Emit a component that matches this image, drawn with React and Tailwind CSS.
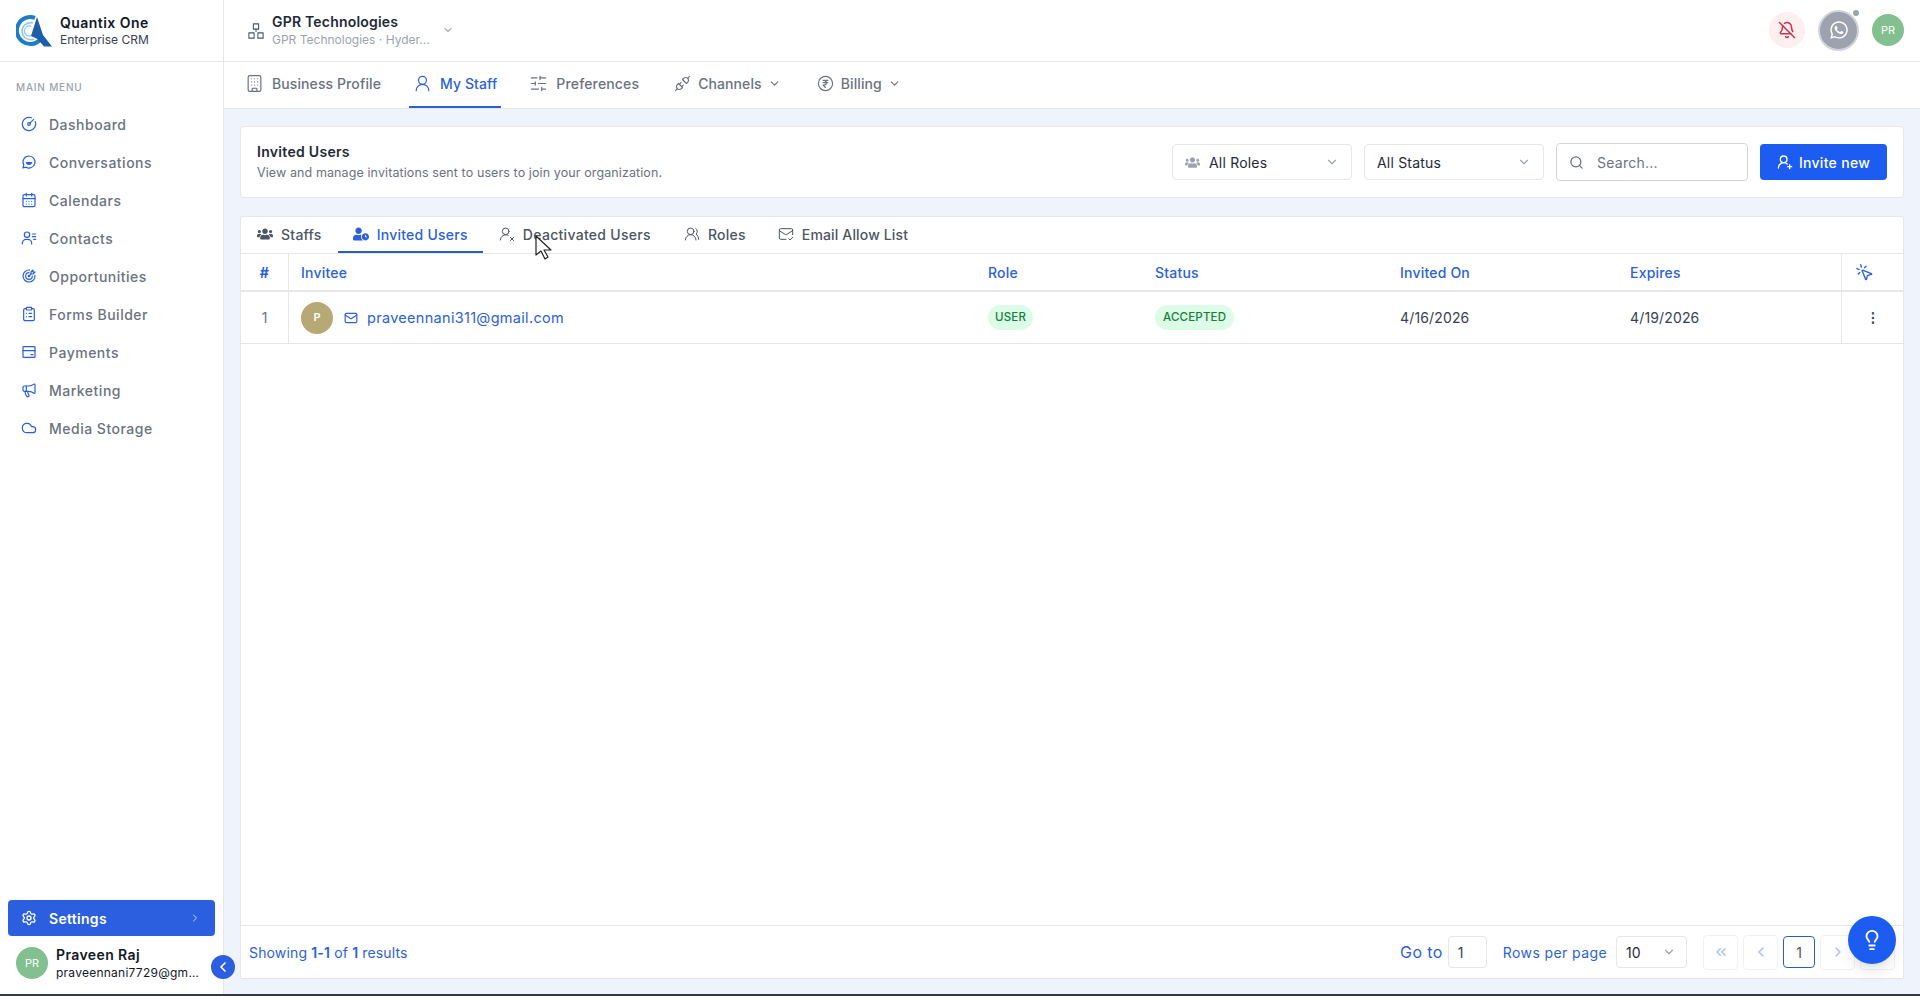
import React from "react";
import { CircleGauge, CalendarDays, ClipboardList, Megaphone, Cloud, Settings, ChevronRight, ChevronLeft, ChevronDown, ChevronsLeft, Building, UserRound, SlidersHorizontal, BellOff, Search, UserRoundPlus, UserRoundX, UsersRound, MailCheck, Mail, EllipsisVertical, MousePointerClick, Lightbulb } from "lucide-react";
import { FaUsers, FaUserClock, FaWhatsapp } from "react-icons/fa";
import { TbCoinRupee, TbPlugConnected, TbTargetArrow } from "react-icons/tb";

const Svg = ({ size = 16, strokeWidth = 1.8, className = "", children }) => (
  <svg width={size} height={size} viewBox="0 0 24 24" fill="none" stroke="currentColor" strokeWidth={strokeWidth} strokeLinecap="round" strokeLinejoin="round" className={className}>{children}</svg>
);
const ChatSmile = (p) => (
  <Svg {...p}>
    <path d="M12 3a9 9 0 1 1-4.5 16.8L3 21l1.2-4.5A9 9 0 0 1 12 3z" />
    <path d="M8 13a4.5 4.5 0 0 0 8 0z" fill="currentColor" />
  </Svg>
);
const ContactsIcon = (p) => (
  <Svg {...p}>
    <circle cx="9" cy="7" r="4" />
    <path d="M2 21v-1a6 6 0 0 1 6-6h2a6 6 0 0 1 6 6v1" />
    <path d="M17 6h5M17 10h5M19 14h3" />
  </Svg>
);
const PaymentsIcon = (p) => (
  <Svg {...p}>
    <rect x="3" y="4" width="18" height="16" rx="1" />
    <path d="M3 10h18M15 16h3" />
  </Svg>
);
const OrgIcon = (p) => (
  <Svg {...p}>
    <rect x="8.5" y="2.5" width="7" height="7" />
    <rect x="2.5" y="14.5" width="7" height="7" />
    <rect x="14.5" y="14.5" width="7" height="7" />
    <path d="M12 9.5v3" />
  </Svg>
);

const nav = [
  ["Dashboard", CircleGauge],
  ["Conversations", ChatSmile],
  ["Calendars", CalendarDays],
  ["Contacts", ContactsIcon],
  ["Opportunities", TbTargetArrow],
  ["Forms Builder", ClipboardList],
  ["Payments", PaymentsIcon],
  ["Marketing", Megaphone],
  ["Media Storage", Cloud],
];

function Logo() {
  return (
    <svg viewBox="0 0 36 32" className="w-[36px] h-[32px]">
      <path d="M19 2.9 A13.5 13.5 0 1 0 24 25" fill="none" stroke="#1c7cc4" strokeWidth="4" />
      <path d="M17 8 A8.5 8.5 0 1 0 18 24" fill="none" stroke="#8cc8ee" strokeWidth="1.6" />
      <path d="M15.5 11.5 A5 5 0 1 0 15.5 20.5" fill="none" stroke="#8cc8ee" strokeWidth="1.2" />
      <path d="M21 2 L27 20 L36 31.5 L28 31.5 L21.5 24 L15 21 Z" fill="#1c5ea8" />
    </svg>
  );
}

export default function App() {
  return (
    <div className="h-[996px] w-[1920px] flex flex-col font-['Inter',sans-serif] bg-[#eff3fc] overflow-hidden">
      <div className="flex flex-1 min-h-0">
        <aside className="w-[224px] bg-white border-r border-[#e5e7eb] flex flex-col relative shrink-0">
          <div className="h-[62px] flex items-center gap-[8px] pl-[16px] border-b border-[#e5e7eb] shrink-0">
            <Logo />
            <div className="leading-none">
              <div className="text-[14px] font-semibold text-[#111827] leading-[18px] tracking-[0.45px]">Quantix One</div>
              <div className="text-[12px] text-[#374151] leading-[16px]">Enterprise CRM</div>
            </div>
          </div>
          <div className="px-[16px] pt-[19px] text-[10px] font-medium tracking-[0.8px] text-[#9ca3af] leading-[12px]">MAIN MENU</div>
          <nav className="flex flex-col mt-[12px]">
            {nav.map(([t, I]) => (
              <div key={t} className="h-[38px] flex items-center gap-[12px] pl-[21px]">
                <I size={16} strokeWidth={1.8} className="text-[#2a5fdf]" />
                <span className="text-[14px] font-medium text-[#6b7280] tracking-[0.5px]">{t}</span>
              </div>
            ))}
          </nav>
          <div className="mt-auto px-[8px]">
            <div className="h-[36px] rounded-[4px] bg-[#2b5fe0] flex items-center pl-[13px] pr-[14px] gap-[12px]">
              <Settings size={16} className="text-white" />
              <span className="text-[14px] font-semibold text-white tracking-[0.3px]">Settings</span>
              <ChevronRight size={12} className="ml-auto text-[#c7d5f7]" />
            </div>
          </div>
          <div className="h-[58px] flex items-center pl-[16px] gap-[8px] pb-[4px] shrink-0">
            <div className="w-[32px] h-[32px] rounded-full bg-[#82c08f] text-white text-[11px] flex items-center justify-center shrink-0">PR</div>
            <div className="min-w-0">
              <div className="text-[14px] font-semibold text-[#111827] leading-[18px] tracking-[0.4px]">Praveen Raj</div>
              <div className="text-[12px] text-[#111827] leading-[17px] w-[145px] truncate tracking-[0.25px]">praveennani7729@gmail.com</div>
            </div>
          </div>
          <div className="absolute left-[211px] top-[955px] w-[24px] h-[24px] rounded-full bg-[#2b5fe0] flex items-center justify-center z-10">
            <ChevronLeft size={16} strokeWidth={2.5} className="text-white" />
          </div>
        </aside>
        <main className="flex-1 min-w-0 flex flex-col">
          <header className="h-[62px] bg-white border-b border-[#e5e7eb] flex items-center pl-[23px] pr-[16px] shrink-0">
            <OrgIcon size={18} strokeWidth={1.4} className="text-[#4b5563]" />
            <div className="ml-[7px]">
              <div className="text-[14px] font-semibold text-[#1f2937] leading-[18px] tracking-[0.2px]">GPR Technologies</div>
              <div className="text-[12px] text-[#9ca3af] leading-[17px]">GPR Technologies · Hyder...</div>
            </div>
            <ChevronDown size={12} className="ml-[12px] -mt-[2px] text-[#6b7280]" />
            <div className="ml-auto flex items-center gap-[13px] -mt-[1px]">
              <div className="w-[36px] h-[36px] rounded-full bg-[#fdeef0] flex items-center justify-center"><BellOff size={18} className="text-[#d0314a]" /></div>
              <div className="relative w-[41px] h-[41px] rounded-full bg-[#9ca3af] border-2 border-[#d1d5db] flex items-center justify-center">
                <FaWhatsapp size={20} className="text-white" />
                <span className="absolute right-[-2px] top-[-2px] w-[6px] h-[6px] rounded-full bg-[#9ca3af]"></span>
              </div>
              <div className="w-[32px] h-[32px] rounded-full bg-[#82c08f] text-white text-[11px] flex items-center justify-center">PR</div>
            </div>
          </header>
          <div className="h-[47px] bg-white border-b border-[#e5e7eb] flex items-stretch pl-[17px] gap-[24px] shrink-0">
            {[
              ["Business Profile", Building, false, false, "tracking-[0.1px]"],
              ["My Staff", UserRound, false, true, "tracking-[0.1px]"],
              ["Preferences", SlidersHorizontal, false, false, "tracking-[0.15px]"],
              ["Channels", TbPlugConnected, true, false, "ml-[2px] tracking-[0.1px]"],
              ["Billing", TbCoinRupee, true, false, "ml-[3px] tracking-[0.1px]"],
            ].map(([t, I, dd, act, c]) => (
              <div key={t} className={`flex items-center px-[4px] pb-[1px] text-[14px] font-medium border-b-2 ${c} ${dd ? "gap-[6px]" : "gap-[8px]"} ${act ? "border-[#2b5fe0] text-[#2b5fe0]" : "border-transparent text-[#6b7280]"}`}>
                <I size={19} strokeWidth={1.5} />
                <span>{t}</span>
                {dd && <ChevronDown size={13} />}
              </div>
            ))}
          </div>
          <div className="flex-1 min-h-0 flex flex-col gap-[18px] pt-[17px] pb-[15px] pl-[16px] pr-[16px]">
            <section className="h-[72px] bg-white rounded-[4px] border border-[#e5e7eb] flex items-center pl-[16px] pr-[16px] shrink-0">
              <div>
                <div className="text-[14px] font-semibold text-[#1f2937] leading-[21px] tracking-[0.3px]">Invited Users</div>
                <div className="text-[12.5px] text-[#6b7280] leading-[21px] tracking-[0.1px]">View and manage invitations sent to users to join your organization.</div>
              </div>
              <div className="ml-auto flex items-center gap-[12px]">
                <div className="w-[180px] h-[36px] border border-[#e5e7eb] rounded-[4px] flex items-center pl-[12px] pr-[12px] gap-[9px] text-[14px] tracking-[0.2px] text-[#1f2937]">
                  <FaUsers size={15} className="text-[#9ca3af]" /> All Roles <ChevronDown size={14} className="ml-auto text-[#9ca3af]" />
                </div>
                <div className="w-[180px] h-[36px] border border-[#e5e7eb] rounded-[4px] flex items-center pl-[12px] pr-[12px] text-[14px] tracking-[0.2px] text-[#1f2937]">
                  All Status <ChevronDown size={14} className="ml-auto text-[#9ca3af]" />
                </div>
                <div className="w-[192px] h-[38px] border border-[#d1d5db] rounded-[4px] flex items-center pl-[12px] gap-[13px] text-[14px] tracking-[0.25px] text-[#6b7280]">
                  <Search size={15} /> Search...
                </div>
                <div className="w-[127px] h-[36px] bg-[#1d5cf0] rounded-[4px] flex items-center justify-center gap-[6px] text-white text-[14px] font-medium tracking-[0.3px]">
                  <UserRoundPlus size={16} /> Invite new
                </div>
              </div>
            </section>
            <section className="flex-1 min-h-0 bg-white border border-[#e5e7eb] flex flex-col rounded-[2px]">
              <div className="h-[37px] flex items-stretch border-b border-[#e5e7eb] text-[14px] shrink-0">
                {[
                  ["Staffs", FaUsers, false, "pl-[16px] pr-[16px] tracking-[0.25px]"],
                  ["Invited Users", FaUserClock, true, "px-[15px] tracking-[0.25px]"],
                  ["Deactivated Users", UserRoundX, false, "pl-[16px] pr-[17px] tracking-[0.3px]"],
                  ["Roles", UsersRound, false, "px-[16px] tracking-[0.25px]"],
                  ["Email Allow List", MailCheck, false, "px-[16px] tracking-[0.15px]"],
                ].map(([t, I, act, c]) => (
                  <div key={t} className={`flex items-center gap-[8px] border-b-2 ${c} ${act ? "border-[#2b5fbf] text-[#2b5fe0]" : "border-transparent text-[#4b5563]"}`}>
                    <I size={16} strokeWidth={1.5} /> <span className="font-medium">{t}</span>
                  </div>
                ))}
              </div>
              <div className="grid grid-cols-[48px_686px_167px_245px_230px_224px_1fr] h-[38px] border-b-2 border-[#e5e7eb] items-stretch text-[14px] font-medium tracking-[0.2px] text-[#2b5fe0] shrink-0">
                <div className="border-r border-[#e5e7eb] flex items-center justify-center font-bold">#</div>
                <div className="flex items-center pl-[12px]">Invitee</div>
                <div className="flex items-center pl-[13px]">Role</div>
                <div className="flex items-center pl-[13px]">Status</div>
                <div className="flex items-center pl-[13px]">Invited On</div>
                <div className="flex items-center pl-[13px]">Expires</div>
                <div className="border-l border-[#e5e7eb] flex items-center pl-[13px]"><MousePointerClick size={19} strokeWidth={1.7} /></div>
              </div>
              <div className="grid grid-cols-[48px_686px_167px_245px_230px_224px_1fr] h-[52px] border-b border-[#e5e7eb] items-stretch text-[14px] shrink-0">
                <div className="border-r border-[#e5e7eb] flex items-center justify-center text-[#6b7280]">1</div>
                <div className="flex items-center pl-[12px] text-[#2b5fe0]">
                  <div className="w-[32px] h-[32px] rounded-full bg-[#b7a976] text-white text-[11px] font-semibold flex items-center justify-center">P</div>
                  <Mail size={14} className="ml-[11px]" />
                  <span className="ml-[9px] text-[14.5px] tracking-[0.3px]">praveennani311@gmail.com</span>
                </div>
                <div className="flex items-center pl-[13px]"><span className="h-[25px] px-[7px] rounded-full bg-[#dcfce7] text-[#15803d] text-[11.5px] font-medium tracking-[0.2px] flex items-center">USER</span></div>
                <div className="flex items-center pl-[13px]"><span className="h-[25px] px-[8px] rounded-full bg-[#dcfce7] text-[#15803d] text-[11.5px] font-medium tracking-[0.2px] flex items-center">ACCEPTED</span></div>
                <div className="flex items-center pl-[13px] text-[#374151] tracking-[0.15px]">4/16/2026</div>
                <div className="flex items-center pl-[13px] text-[#374151] tracking-[0.15px]">4/19/2026</div>
                <div className="border-l border-[#e5e7eb] flex items-center justify-center text-[#4b5563]"><EllipsisVertical size={16} /></div>
              </div>
              <div className="flex-1"></div>
              <div className="h-[53px] border-t border-[#e5e7eb] flex items-center pl-[8px] pr-[8px] text-[#2b5fe0] shrink-0">
                <div className="text-[14px] tracking-[0.15px]">Showing <b className="font-semibold">1-1</b> of <b className="font-semibold">1</b> results</div>
                <div className="ml-auto flex items-center">
                  <span className="text-[16px] mr-[5px] tracking-[0.4px]">Go to</span>
                  <div className="w-[39px] h-[32px] border border-[#e5e7eb] rounded-[4px] flex items-center pl-[9px] text-[14px] text-[#374151]">1</div>
                  <span className="text-[14px] ml-[16px] mr-[9px] tracking-[0.4px]">Rows per page</span>
                  <div className="w-[71px] h-[32px] border border-[#e5e7eb] rounded-[4px] flex items-center pl-[9px] pr-[10px] text-[14px] text-[#1f2937]">10<ChevronDown size={14} className="ml-auto text-[#9ca3af]" /></div>
                  <div className="flex items-center gap-[5px] ml-[16px]">
                    {[ChevronsLeft, ChevronLeft, null, ChevronRight, null].map((I, i) => (
                      <div key={i} className={`rounded-[4px] border flex items-center justify-center ${i === 2 ? "w-[32px] h-[32px] border-[#2b5fbf] text-[#4b5563] text-[14px]" : "w-[35px] h-[35px] border-[#f0f1f4] text-[#a9bdec]"}`}>
                        {i === 2 ? "1" : I ? <I size={16} /> : null}
                      </div>
                    ))}
                  </div>
                </div>
              </div>
            </section>
          </div>
        </main>
      </div>
      <div className="h-[2px] bg-[#333a45] shrink-0"></div>
      <div className="fixed left-[1848px] top-[916px] w-[48px] h-[48px] rounded-full bg-[#1d5cf0] flex items-center justify-center shadow-lg z-20">
        <Lightbulb size={22} className="text-white" />
      </div>
      <svg className="fixed left-[534px] top-[234px] z-30" width="20" height="28" viewBox="0 0 20 28"><path d="M2 2 V21 L7 17 L11 25 L14 23 L10 16 L17 16 Z" fill="#fff" stroke="#222" strokeWidth="1.2" strokeLinejoin="round" /></svg>
    </div>
  );
}
